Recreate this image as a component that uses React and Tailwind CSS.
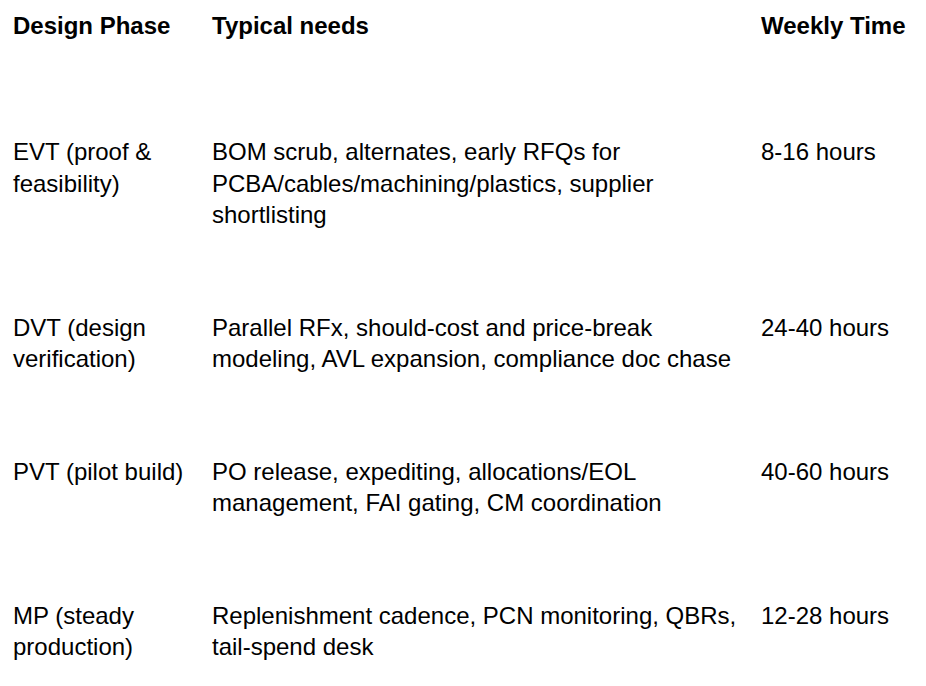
import React from 'react';

const rows = [
  {
    phase: 'EVT (proof & feasibility)',
    needs: 'BOM scrub, alternates, early RFQs for PCBA/cables/machining/plastics, supplier shortlisting',
    time: '8-16 hours',
  },
  {
    phase: 'DVT (design verification)',
    needs: 'Parallel RFx, should-cost and price-break modeling, AVL expansion, compliance doc chase',
    time: '24-40 hours',
  },
  {
    phase: 'PVT (pilot build)',
    needs: 'PO release, expediting, allocations/EOL management, FAI gating, CM coordination',
    time: '40-60 hours',
  },
  {
    phase: 'MP (steady production)',
    needs: 'Replenishment cadence, PCN monitoring, QBRs, tail-spend desk',
    time: '12-28 hours',
  },
];

export default function App() {
  return (
    <div className="min-h-[686px] w-[926px] bg-white text-black font-['Liberation_Sans',Arial,sans-serif] text-[24px] leading-[31.5px]">
      <div className="grid grid-cols-[199px_549px_1fr] pl-[13px] pt-[10px] pb-[54px] font-bold">
        <div>Design Phase</div>
        <div>Typical needs</div>
        <div>Weekly Time</div>
      </div>
      {rows.map((row, idx) => (
        <div key={idx} className="grid grid-cols-[199px_549px_1fr] pl-[13px] py-[40.5px]">
          <div className="pr-2">{row.phase}</div>
          <div className="pr-[14px]">{row.needs}</div>
          <div className="whitespace-nowrap">{row.time}</div>
        </div>
      ))}
    </div>
  );
}
